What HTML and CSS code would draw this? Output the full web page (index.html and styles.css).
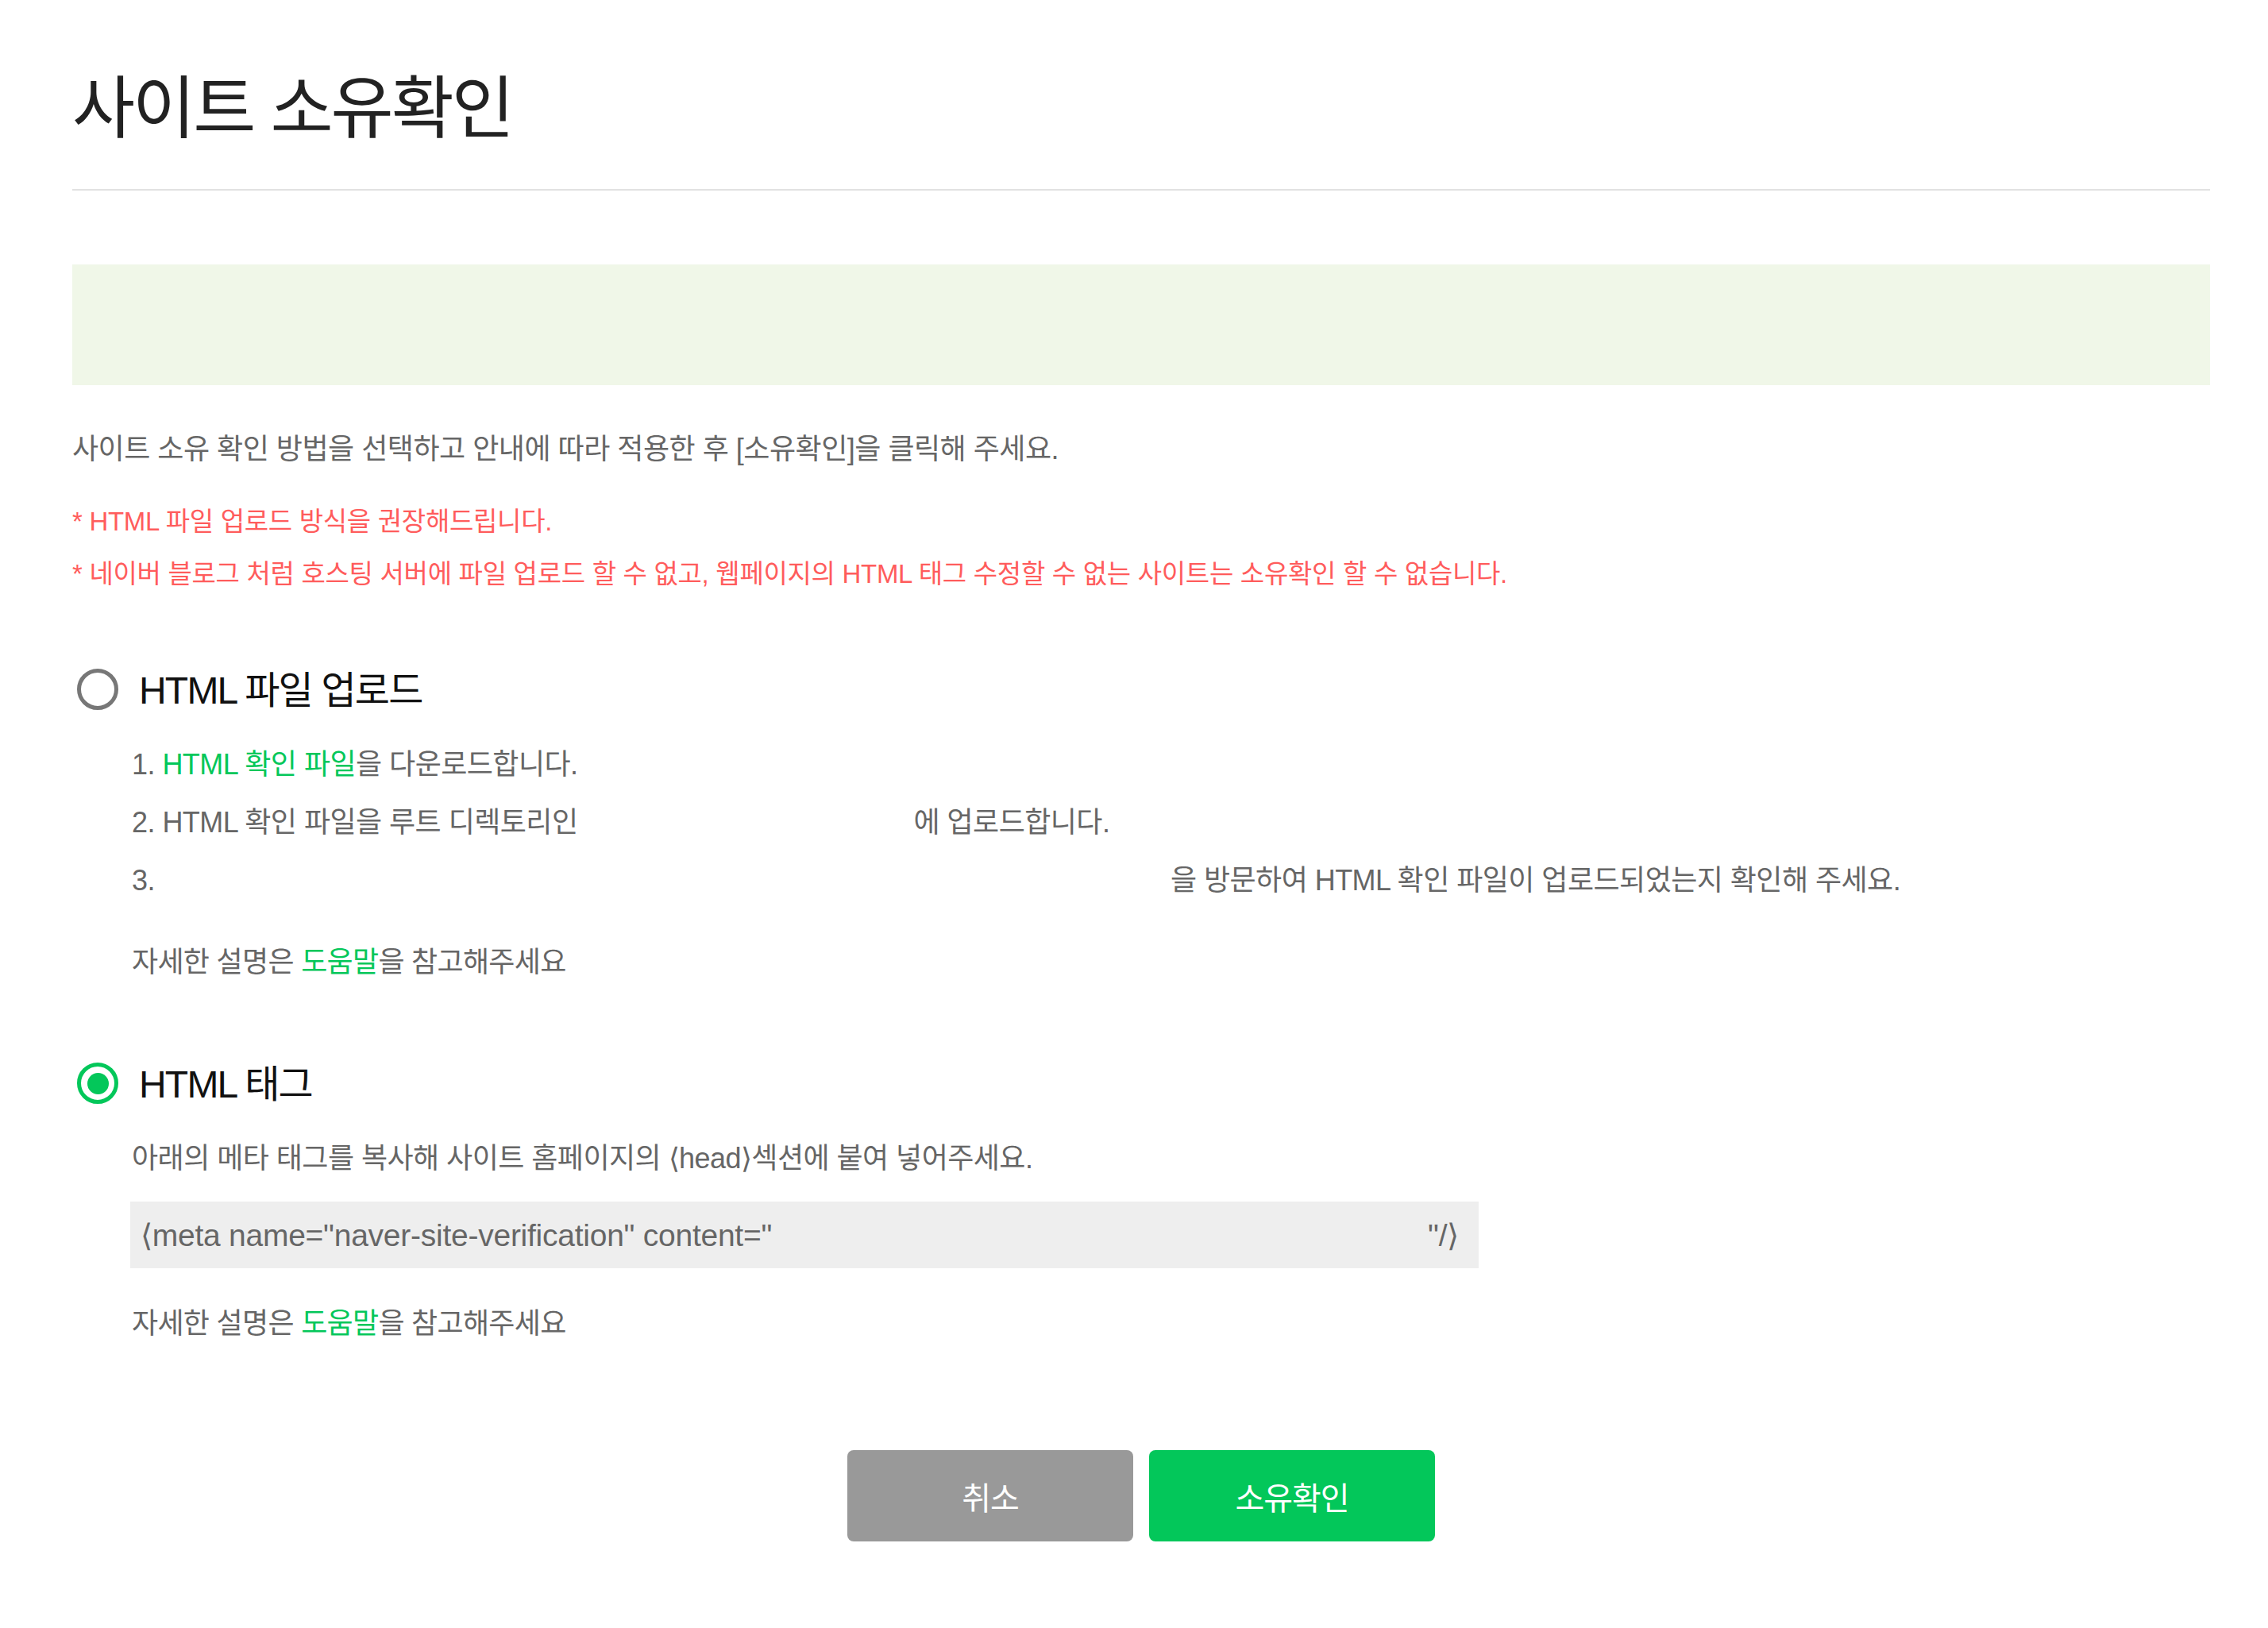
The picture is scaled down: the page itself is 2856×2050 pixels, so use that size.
FILE: index.html
```html
<!DOCTYPE html>
<html lang="ko">
<head>
<meta charset="utf-8">
<title>사이트 소유확인</title>
<link rel="stylesheet" href="styles.css">
</head>
<body>
<div class="page">
  <h1 class="title">사이트 소유확인</h1>
  <div class="divider"></div>
  <div class="banner"></div>

  <p class="intro">사이트 소유 확인 방법을 선택하고 안내에 따라 적용한 후 [소유확인]을 클릭해 주세요.</p>
  <ul class="notes">
    <li>* HTML 파일 업로드 방식을 권장해드립니다.</li>
    <li>* 네이버 블로그 처럼 호스팅 서버에 파일 업로드 할 수 없고, 웹페이지의 HTML 태그 수정할 수 없는 사이트는 소유확인 할 수 없습니다.</li>
  </ul>

  <section class="method method-file">
    <label class="method-head"><span class="radio"></span><span class="method-name">HTML 파일 업로드</span></label>
    <ol class="steps">
      <li>1. <a class="link">HTML 확인 파일</a>을 다운로드합니다.</li>
      <li>2. HTML 확인 파일을 루트 디렉토리인<span class="blank blank-dir"></span>에 업로드합니다.</li>
      <li>3.<span class="blank blank-url"></span>을 방문하여 HTML 확인 파일이 업로드되었는지 확인해 주세요.</li>
    </ol>
    <p class="help">자세한 설명은 <a class="link">도움말</a>을 참고해주세요</p>
  </section>

  <section class="method method-tag">
    <label class="method-head"><span class="radio checked"></span><span class="method-name">HTML 태그</span></label>
    <p class="desc">아래의 메타 태그를 복사해 사이트 홈페이지의 ⟨head⟩섹션에 붙여 넣어주세요.</p>
    <div class="meta-box"><span>⟨meta name="naver-site-verification" content="</span><span class="blank blank-code"></span><span>"/⟩</span></div>
    <p class="help help-tag">자세한 설명은 <a class="link">도움말</a>을 참고해주세요</p>
  </section>

  <div class="actions">
    <button class="btn btn-cancel">취소</button>
    <button class="btn btn-ok">소유확인</button>
  </div>
</div>
</body>
</html>
```
FILE: styles.css
```css
* {
  box-sizing: border-box;
  margin: 0;
  padding: 0;
}

body {
  background: #fff;
  color: #666;
  font-family: "Liberation Sans", "Noto Sans CJK KR", sans-serif;
}

.page {
  margin-left: 91px;
  width: 2692px;
  padding-top: 80px;
  padding-bottom: 100px;
}

.title {
  font-family: "Noto Sans CJK KR", sans-serif;
  font-size: 86px;
  font-weight: 400;
  letter-spacing: -3px;
  line-height: 100px;
  color: #222;
}

.divider {
  margin-top: 58px;
  height: 2px;
  background: #e2e2e2;
}

.banner {
  margin-top: 93px;
  height: 152px;
  background: #f0f7e8;
}

.intro {
  margin-top: 56px;
  font-size: 36px;
  letter-spacing: -0.5px;
  line-height: 50px;
  color: #666;
}

.notes {
  list-style: none;
  margin-top: 33px;
  font-size: 33px;
  letter-spacing: -0.3px;
  line-height: 66px;
  color: #ff5c5c;
}

.method-head {
  display: flex;
  align-items: center;
  gap: 26px;
  height: 60px;
  padding-left: 6px;
  font-size: 48px;
  letter-spacing: -1.8px;
  color: #111;
}

.method-name {
  padding-bottom: 7px;
}

.method-file .method-head {
  margin-top: 82px;
}

.method-tag .method-head {
  margin-top: 97px;
}

.radio {
  display: grid;
  place-items: center;
  flex: none;
  width: 52px;
  height: 52px;
  border: 5px solid #777;
  border-radius: 50%;
}

.radio.checked {
  border-color: #03c75a;
}

.radio.checked::after {
  content: "";
  width: 27px;
  height: 27px;
  border-radius: 50%;
  background: #03c75a;
}

.steps {
  list-style: none;
  margin-top: 28px;
  padding-left: 75px;
  font-size: 36px;
  letter-spacing: -0.55px;
  line-height: 73px;
  color: #666;
}

.link {
  color: #03c75a;
  text-decoration: none;
}

.blank {
  display: inline-block;
  vertical-align: middle;
  height: 1px;
}

.blank-dir {
  width: 423px;
}

.blank-url {
  width: 1279px;
}

.help {
  margin-top: 42px;
  padding-left: 75px;
  font-size: 36px;
  letter-spacing: -0.7px;
  line-height: 50px;
  color: #666;
}

.desc {
  margin-top: 40px;
  padding-left: 75px;
  font-size: 36px;
  letter-spacing: -0.55px;
  line-height: 50px;
  color: #666;
}

.meta-box {
  display: flex;
  align-items: center;
  margin-top: 29px;
  margin-left: 73px;
  width: 1698px;
  height: 84px;
  padding-left: 13px;
  background: #eee;
  font-size: 39px;
  letter-spacing: -0.25px;
  color: #666;
  white-space: nowrap;
}

.blank-code {
  width: 826px;
}

.help-tag {
  margin-top: 45px;
}

.actions {
  display: flex;
  justify-content: center;
  gap: 20px;
  margin-top: 134px;
}

.btn {
  width: 360px;
  height: 115px;
  border: none;
  border-radius: 8px;
  color: #fff;
  font-family: "Noto Sans CJK KR", sans-serif;
  font-size: 40px;
  letter-spacing: -1px;
}

.btn-cancel {
  background: #999;
}

.btn-ok {
  background: #03c75a;
}
```
